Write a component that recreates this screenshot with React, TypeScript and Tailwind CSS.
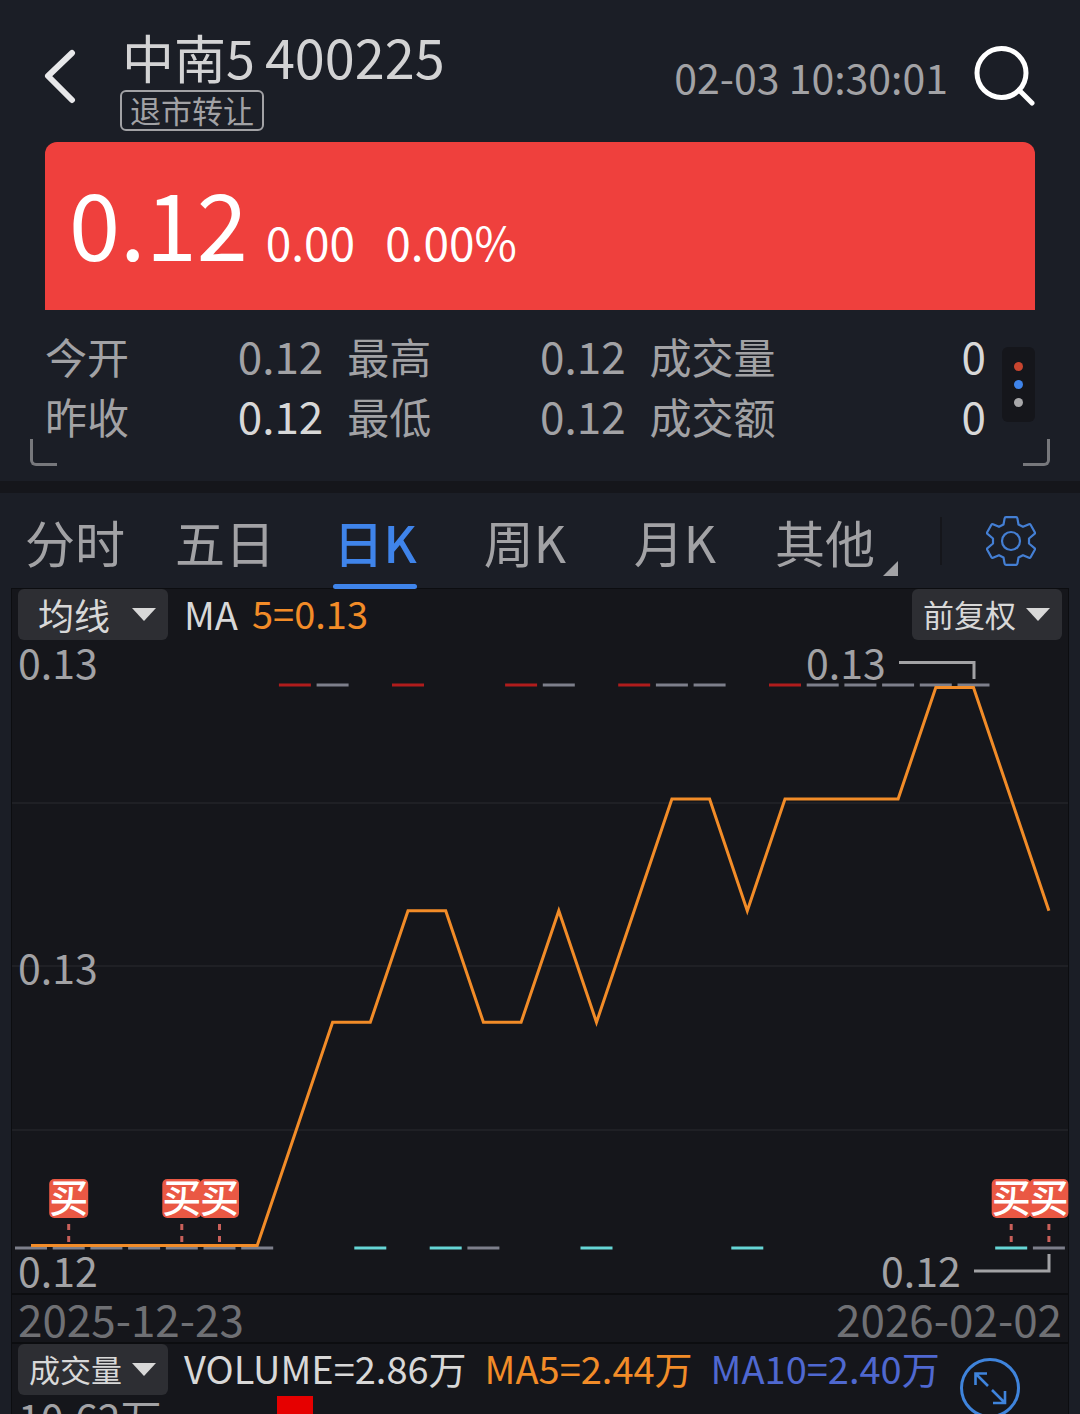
import clsx from "clsx";

type Tone = "muted" | "bright";

interface Stat {
  label: string;
  value: string;
  tone: Tone;
}

const STATS: Stat[][] = [
  [
    { label: "今开", value: "0.12", tone: "muted" },
    { label: "昨收", value: "0.12", tone: "bright" },
  ],
  [
    { label: "最高", value: "0.12", tone: "muted" },
    { label: "最低", value: "0.12", tone: "muted" },
  ],
  [
    { label: "成交量", value: "0", tone: "bright" },
    { label: "成交额", value: "0", tone: "bright" },
  ],
];

const TABS = ["分时", "五日", "日K", "周K", "月K", "其他"];

// one slot per trading day
const STEP = 37.7;
const FIRST = 19;
const dayX = (day: number) => FIRST + day * STEP;

const HIGH_Y = 45;
const LOW_Y = 608;

const RED = "#b01c1c";
const GREY = "#7d7f8b";
const CYAN = "#66d6d6";

const CANDLES: { day: number; high: boolean; color: string }[] = [
  ...[0, 1, 2, 3, 4, 5, 6].map((day) => ({ day, high: false, color: GREY })),
  { day: 7, high: true, color: RED },
  { day: 8, high: true, color: GREY },
  { day: 9, high: false, color: CYAN },
  { day: 10, high: true, color: RED },
  { day: 11, high: false, color: CYAN },
  { day: 12, high: false, color: GREY },
  { day: 13, high: true, color: RED },
  { day: 14, high: true, color: GREY },
  { day: 15, high: false, color: CYAN },
  { day: 16, high: true, color: RED },
  { day: 17, high: true, color: GREY },
  { day: 18, high: true, color: GREY },
  { day: 19, high: false, color: CYAN },
  { day: 20, high: true, color: RED },
  ...[21, 22, 23, 24, 25].map((day) => ({ day, high: true, color: GREY })),
  { day: 26, high: false, color: CYAN },
  { day: 27, high: false, color: GREY },
];

// MA5 in fifths of the low-high range
const MA5 = [0, 0, 0, 0, 0, 0, 0, 1, 2, 2, 3, 3, 2, 2, 3, 2, 3, 4, 4, 3, 4, 4, 4, 4, 5, 5, 4, 3];
const MA_POINTS = MA5.map((v, day) => `${dayX(day)},${605.5 - v * 111.6}`).join(" ");

const BUY_DAYS = [1, 4, 5, 26, 27];

function PriceChart() {
  return (
    <svg viewBox="0 0 1056 653" className="block w-full overflow-visible" role="img" aria-label="日K">
      {[163, 326, 490].map((y) => (
        <line key={y} x1="0" x2="1056" y1={y} y2={y} stroke="#1f2025" strokeWidth="2" />
      ))}
      {CANDLES.map((c) => (
        <line
          key={c.day}
          x1={dayX(c.day) - 16}
          x2={dayX(c.day) + 16}
          y1={c.high ? HIGH_Y : LOW_Y}
          y2={c.high ? HIGH_Y : LOW_Y}
          stroke={c.color}
          strokeWidth="3"
        />
      ))}
      <polyline points={MA_POINTS} fill="none" stroke="#f28c28" strokeWidth="3" />
      <path d="M887 22.5H962V39" fill="none" stroke="#a2a2a5" strokeWidth="3" />
      <path d="M962 631H1037V614" fill="none" stroke="#a2a2a5" strokeWidth="3" />
      <g fill="#a2a2a5" fontSize="41">
        <text x="6" y="39">0.13</text>
        <text x="6" y="344">0.13</text>
        <text x="6" y="647">0.12</text>
        <text x="794" y="39">0.13</text>
        <text x="869" y="647">0.12</text>
      </g>
      {BUY_DAYS.map((day) => (
        <g key={day}>
          <rect x={dayX(day) - 19.5} y="539" width="39" height="39" rx="5" fill="#ea5844" />
          <text x={dayX(day)} y="572" fontSize="39" fontWeight="500" fill="#fff" textAnchor="middle">
            买
          </text>
          <path d={`M${dayX(day)} 584v6m0 6v6`} stroke="#c9605a" strokeWidth="3" />
        </g>
      ))}
    </svg>
  );
}

function DropButton({ label, className }: { label: string; className: string }) {
  return (
    <button
      type="button"
      className="flex h-[51px] w-[150px] items-center justify-between rounded-md bg-[#2d2e33] pr-3 text-[#d8d8d8]"
    >
      <span className={className}>{label}</span>
      <svg viewBox="0 0 24 13" className="w-6 fill-current" aria-hidden="true">
        <path d="M0 0h24L12 13z" />
      </svg>
    </button>
  );
}

function Header() {
  return (
    <header className="flex h-[142px] items-start px-11">
      <button type="button" aria-label="返回" className="mt-12">
        <svg viewBox="0 0 32 56" className="w-8" fill="none" stroke="#e8e8ea" strokeWidth="6" strokeLinecap="round" strokeLinejoin="round">
          <path d="M28 5 4 28l24 24" />
        </svg>
      </button>
      <div className="ml-11 flex-1 pt-[26px]">
        <h1 className="flex h-[60px] items-baseline gap-[10px] pl-[2px] leading-[60px] text-[#d3d3d4]">
          <span className="text-[52px]">中南5</span>
          <span className="text-[54px]">400225</span>
        </h1>
        <span className="mt-1 flex h-[41px] w-fit items-center rounded-md border-2 border-[#a2a2a5] px-2 pb-[2px] text-[31px] leading-none text-[#a2a2a5]">
          退市转让
        </span>
      </div>
      <time className="mt-[46px] text-[41px] leading-[60px] text-[#a2a2a5]">02-03 10:30:01</time>
      <button type="button" aria-label="搜索" className="mt-11 ml-6">
        <svg viewBox="0 0 64 64" className="w-16" fill="none" stroke="#fff" strokeWidth="5" strokeLinecap="round">
          <circle cx="29.5" cy="29" r="24.5" />
          <path d="m47 46 13 13" />
        </svg>
      </button>
    </header>
  );
}

function QuotePanel() {
  return (
    <>
      <section className="mx-[45px] flex h-[168px] items-baseline rounded-t-xl bg-[#ef403d] pl-6 text-white">
        <strong className="text-[92px] leading-[158px] font-normal">0.12</strong>
        <span className="ml-[18px] text-[46px]">0.00</span>
        <span className="ml-[30px] text-[46px]">0.00%</span>
      </section>
      <section className="relative flex h-[171px] items-start pt-[15px] pr-[45px] pl-[45px]">
        <div className="grid flex-1 grid-cols-[278fr_278fr_336fr] gap-x-6">
          {STATS.map((column, i) => (
            <dl key={i}>
              {column.map((s) => (
                <div key={s.label} className="flex h-[60px] items-baseline justify-between leading-[60px]">
                  <dt className="text-[42px] text-[#a2a2a5]">{s.label}</dt>
                  <dd className={clsx("text-[44px]", s.tone === "bright" ? "text-[#d8d8d8]" : "text-[#a2a2a5]")}>
                    {s.value}
                  </dd>
                </div>
              ))}
            </dl>
          ))}
        </div>
        <button
          type="button"
          aria-label="更多"
          className="mt-[22px] ml-4 flex h-[75px] w-[33px] flex-col items-center justify-center gap-[9px] rounded-md bg-[#15161b]"
        >
          <span className="size-[9px] rounded-full bg-[#c8452f]" />
          <span className="size-[9px] rounded-full bg-[#3f84ea]" />
          <span className="size-[9px] rounded-full bg-[#a8a8aa]" />
        </button>
        <span className="absolute bottom-[15px] left-[30px] size-[27px] rounded-bl-md border-b-[3px] border-l-[3px] border-[#77787c]" />
        <span className="absolute right-[30px] bottom-[15px] size-[27px] rounded-br-md border-r-[3px] border-b-[3px] border-[#77787c]" />
      </section>
    </>
  );
}

function PeriodTabs() {
  return (
    <nav className="flex h-24 items-stretch pr-11">
      <div className="grid flex-1 grid-cols-6">
        {TABS.map((tab) => {
          const active = tab === "日K";
          return (
            <button
              key={tab}
              type="button"
              aria-pressed={active}
              className={clsx(
                "relative justify-self-center text-[50px] leading-[94px]",
                active ? "font-medium text-[#3f84ea]" : "text-[#a2a2a5]",
              )}
            >
              {tab}
              {active && <span className="absolute inset-x-0 bottom-0 h-[5px] rounded-full bg-[#3f84ea]" />}
              {tab === "其他" && (
                <svg viewBox="0 0 15 15" className="absolute bottom-[13px] left-full ml-2 w-[15px] fill-current" aria-hidden="true">
                  <path d="M15 0v15H0z" />
                </svg>
              )}
            </button>
          );
        })}
      </div>
      <span className="mr-11 ml-10 h-12 w-[2px] self-center bg-[#15161b]" />
      <button type="button" aria-label="设置">
        <svg viewBox="0 0 50 50" className="w-[50px]" fill="none" stroke="#447fd4" strokeWidth="2.2" strokeLinejoin="round">
          <path d="M20 1.200h10q1.200 0 1.400 1.200L32.500 8.500 37 10.800l6-2.600q1-.4 1.600.6l4.200 7.400q.5 1-.3 1.700L43 22.500v5l5.500 4.600q.8.7.3 1.700l-4.200 7.400q-.6 1-1.600.6l-6-2.600-4.500 2.300-1.100 6.100q-.2 1.200-1.400 1.200H20q-1.200 0-1.400-1.200L17.500 41.500 13 39.200l-6 2.600q-1 .4-1.600-.6l-4.200-7.400q-.5-1 .3-1.700L7 27.500v-5l-5.500-4.600q-.8-.7-.3-1.700l4.200-7.400q.6-1 1.600-.6l6 2.600 4.500-2.300 1.100-6.100q.2-1.200 1.400-1.200z" />
          <circle cx="25" cy="25" r="9" />
        </svg>
      </button>
    </nav>
  );
}

export default function App() {
  return (
    <div className="flex h-screen flex-col overflow-hidden bg-[#1b1e26] font-['Noto_Sans_CJK_SC',sans-serif]">
      <div className="shrink-0">
        <Header />
        <QuotePanel />
      </div>
      <div className="h-3 shrink-0 bg-[#15161b]" />
      <div className="shrink-0">
        <PeriodTabs />
      </div>

      <main className="mx-3 shrink-0 bg-[#15161b] shadow-[0_0_0_1px_#0c0d10]">
        <div className="flex h-[51px] items-center px-[6px]">
          <DropButton label="均线" className="pb-[2px] pl-5 text-[36px] leading-[48px]" />
          <span className="ml-4 pb-[2px] text-[38px] leading-[48px] text-[#d8d8d8]">MA</span>
          <span className="ml-[14px] pb-1 text-[38px] leading-[48px] text-[#f28c28]">5=0.13</span>
          <div className="ml-auto">
            <DropButton label="前复权" className="pb-[2px] pl-[11px] text-[31px] leading-[48px]" />
          </div>
        </div>

        <PriceChart />

        <div className="flex h-[51px] items-center justify-between border-y-2 border-[#0c0d10] px-[6px] text-[44px] leading-[47px] text-[#6f7074]">
          <time>2025-12-23</time>
          <time>2026-02-02</time>
        </div>

        <section className="relative">
          <div className="flex h-[51px] items-center px-[6px] text-[38px] leading-[48px]">
            <DropButton label="成交量" className="pb-[2px] pl-[11px] text-[31px] leading-[48px]" />
            <span className="ml-4 pb-1 text-[#d8d8d8]">VOLUME=2.86万</span>
            <span className="ml-[18px] pb-1 text-[#f28c28]">MA5=2.44万</span>
            <span className="ml-[18px] pb-1 text-[#4f68d0]">MA10=2.40万</span>
          </div>
          <svg viewBox="0 0 1056 180" className="block w-full" role="img" aria-label="成交量">
            <text x="6" y="40" fontSize="41" fill="#a2a2a5">
              10.62万
            </text>
            <rect x="265" y="1" width="36" height="179" fill="#e60000" />
          </svg>
          <button type="button" aria-label="全屏" className="absolute top-[14px] right-12">
            <svg viewBox="0 0 60 60" className="w-[60px]" fill="none" stroke="#3f84dc" strokeWidth="3">
              <circle cx="30" cy="30" r="28.5" />
              <path d="M28 28 15.500 15.500M15.500 27V15.500H27M32 32l13 13M45 33v12H33" strokeWidth="2.600" />
            </svg>
          </button>
        </section>
      </main>
    </div>
  );
}
